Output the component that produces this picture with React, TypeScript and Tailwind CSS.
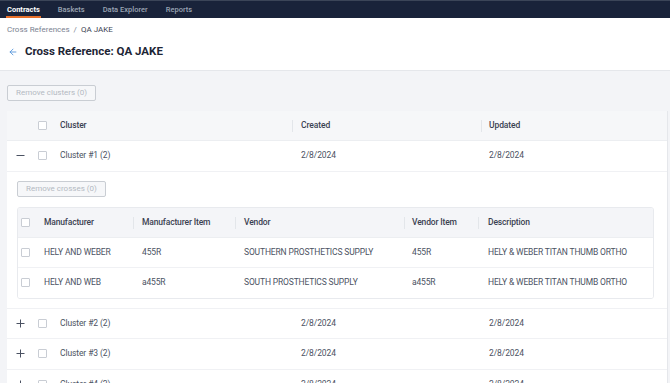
import { ArrowLeft } from 'lucide-react';

const font = { fontFamily: 'Roboto, "Noto Sans", sans-serif' };

const Check = () => (
  <span className="block w-[9px] h-[9px] border border-[#c9cdd4] rounded-[1px] bg-white" />
);

const Sep = () => <span className="absolute left-0 top-[9px] h-[12px] border-l border-[#e3e6ea]" />;

const Expander = ({ open }: { open: boolean }) => (
  <svg width="9" height="9" viewBox="0 0 9 9" className="text-[#4b5262]">
    <path d="M0.5 4.5h8" stroke="currentColor" strokeWidth="1" />
    {!open && <path d="M4.5 0.5v8" stroke="currentColor" strokeWidth="1" />}
  </svg>
);

const clusterCols = 'grid grid-cols-[53px_232px_189px_1fr] items-center whitespace-nowrap tracking-[-0.1px]';
const crossCols = 'grid grid-cols-[26px_89px_102px_169px_74px_1fr] items-center whitespace-nowrap tracking-[-0.15px]';

const crosses = [
  ['HELY AND WEBER', '455R', 'SOUTHERN PROSTHETICS SUPPLY', '455R', 'HELY & WEBER TITAN THUMB ORTHO'],
  ['HELY AND WEB', 'a455R', 'SOUTH PROSTHETICS SUPPLY', 'a455R', 'HELY & WEBER TITAN THUMB ORTHO'],
];

const ClusterRow = ({ name, open }: { name: string; open: boolean }) => (
  <div className={`${clusterCols} h-[30.5px] border-b border-[#f0f1f4] bg-white text-[8.5px] text-[#4b5262]`}>
    <div className="flex items-center">
      <span className="w-[31px] pl-[9px] flex">
        <Expander open={open} />
      </span>
      <Check />
    </div>
    <div>{name}</div>
    <div className="pl-[9px]">2/8/2024</div>
    <div className="pl-[8px]">2/8/2024</div>
  </div>
);

export default function App() {
  return (
    <div className="w-[670px] h-[383px] overflow-hidden bg-[#f3f4f7]" style={font}>
      <nav className="h-[18px] bg-[#19233a] border-t border-[#3b4558] flex items-stretch pl-[7px] gap-[18px] text-[7.5px] whitespace-nowrap">
        <span className="relative flex items-center text-white font-bold">
          Contracts
          <span className="absolute left-[-1px] right-[-1px] bottom-0 h-[2px] bg-[#e8702a]" />
        </span>
        <span className="flex items-center text-[#9aa3b3] font-medium">Baskets</span>
        <span className="flex items-center text-[#9aa3b3] font-medium">Data Explorer</span>
        <span className="flex items-center text-[#9aa3b3] font-medium">Reports</span>
      </nav>

      <header className="bg-white h-[53px] border-b border-[#e5e7eb] pl-[7px] pt-[6px]">
        <div className="h-[12px] flex items-center gap-[4px] text-[8px] text-[#7a8190]">
          <span>Cross References</span>
          <span>/</span>
          <span className="text-[#3c4353]">QA JAKE</span>
        </div>
        <div className="mt-[8px] h-[16px] flex items-center">
          <ArrowLeft size={10} strokeWidth={2} className="text-[#4a8fd8] ml-[1px]" />
          <h1 className="ml-[7px] text-[11.5px] font-bold text-[#1d2535]">Cross Reference: QA JAKE</h1>
        </div>
      </header>

      <section className="px-[7px] pt-[14px]">
        <button className="flex items-center h-[16px] px-[8px] border border-[#c9cdd3] rounded-[2px] text-[8px] text-[#b4b9c2] bg-[#f6f7f9]">
          Remove clusters (0)
        </button>

        <div className="mt-[10px] mr-[-5px] border-r border-[#e5e7eb]">
          <div className={`${clusterCols} h-[30px] bg-[#f6f7f9] border-b border-[#eceef1] text-[8.5px] font-medium text-[#3b4252]`}>
            <div className="pl-[31px]"><Check /></div>
            <div>Cluster</div>
            <div className="relative h-full flex items-center pl-[9px]"><Sep />Created</div>
            <div className="relative h-full flex items-center pl-[8px]"><Sep />Updated</div>
          </div>

          <ClusterRow name="Cluster #1 (2)" open />

          <div className="bg-white border-b border-[#f0f1f4] px-[10px] pt-[9px] pb-[9px]">
            <button className="flex items-center h-[16px] px-[8px] border border-[#c9cdd3] rounded-[2px] text-[8px] text-[#b4b9c2] bg-[#f6f7f9]">
              Remove crosses (0)
            </button>
            <div className="mt-[10px] mr-[3px] border border-[#e8eaee] rounded-[3px] overflow-hidden">
              <div className={`${crossCols} h-[30px] bg-[#f4f5f8] border-b border-[#eceef1] text-[8.5px] font-medium text-[#3b4252]`}>
                <div className="pl-[3px]"><Check /></div>
                <div>Manufacturer</div>
                <div className="relative h-full flex items-center pl-[9px]"><Sep />Manufacturer Item</div>
                <div className="relative h-full flex items-center pl-[9px]"><Sep />Vendor</div>
                <div className="relative h-full flex items-center pl-[8px]"><Sep />Vendor Item</div>
                <div className="relative h-full flex items-center pl-[10px]"><Sep />Description</div>
              </div>
              {crosses.map((r, i) => (
                <div
                  key={i}
                  className={`${crossCols} h-[30px] bg-white text-[8.5px] text-[#4b5262] ${i === 0 ? 'border-b border-[#f0f1f4]' : ''}`}
                >
                  <div className="pl-[3px]"><Check /></div>
                  <div>{r[0]}</div>
                  <div className="pl-[9px]">{r[1]}</div>
                  <div className="pl-[9px]">{r[2]}</div>
                  <div className="pl-[8px]">{r[3]}</div>
                  <div className="pl-[10px]">{r[4]}</div>
                </div>
              ))}
            </div>
          </div>

          <ClusterRow name="Cluster #2 (2)" open={false} />
          <ClusterRow name="Cluster #3 (2)" open={false} />
          <ClusterRow name="Cluster #4 (2)" open={false} />
        </div>
      </section>
    </div>
  );
}
